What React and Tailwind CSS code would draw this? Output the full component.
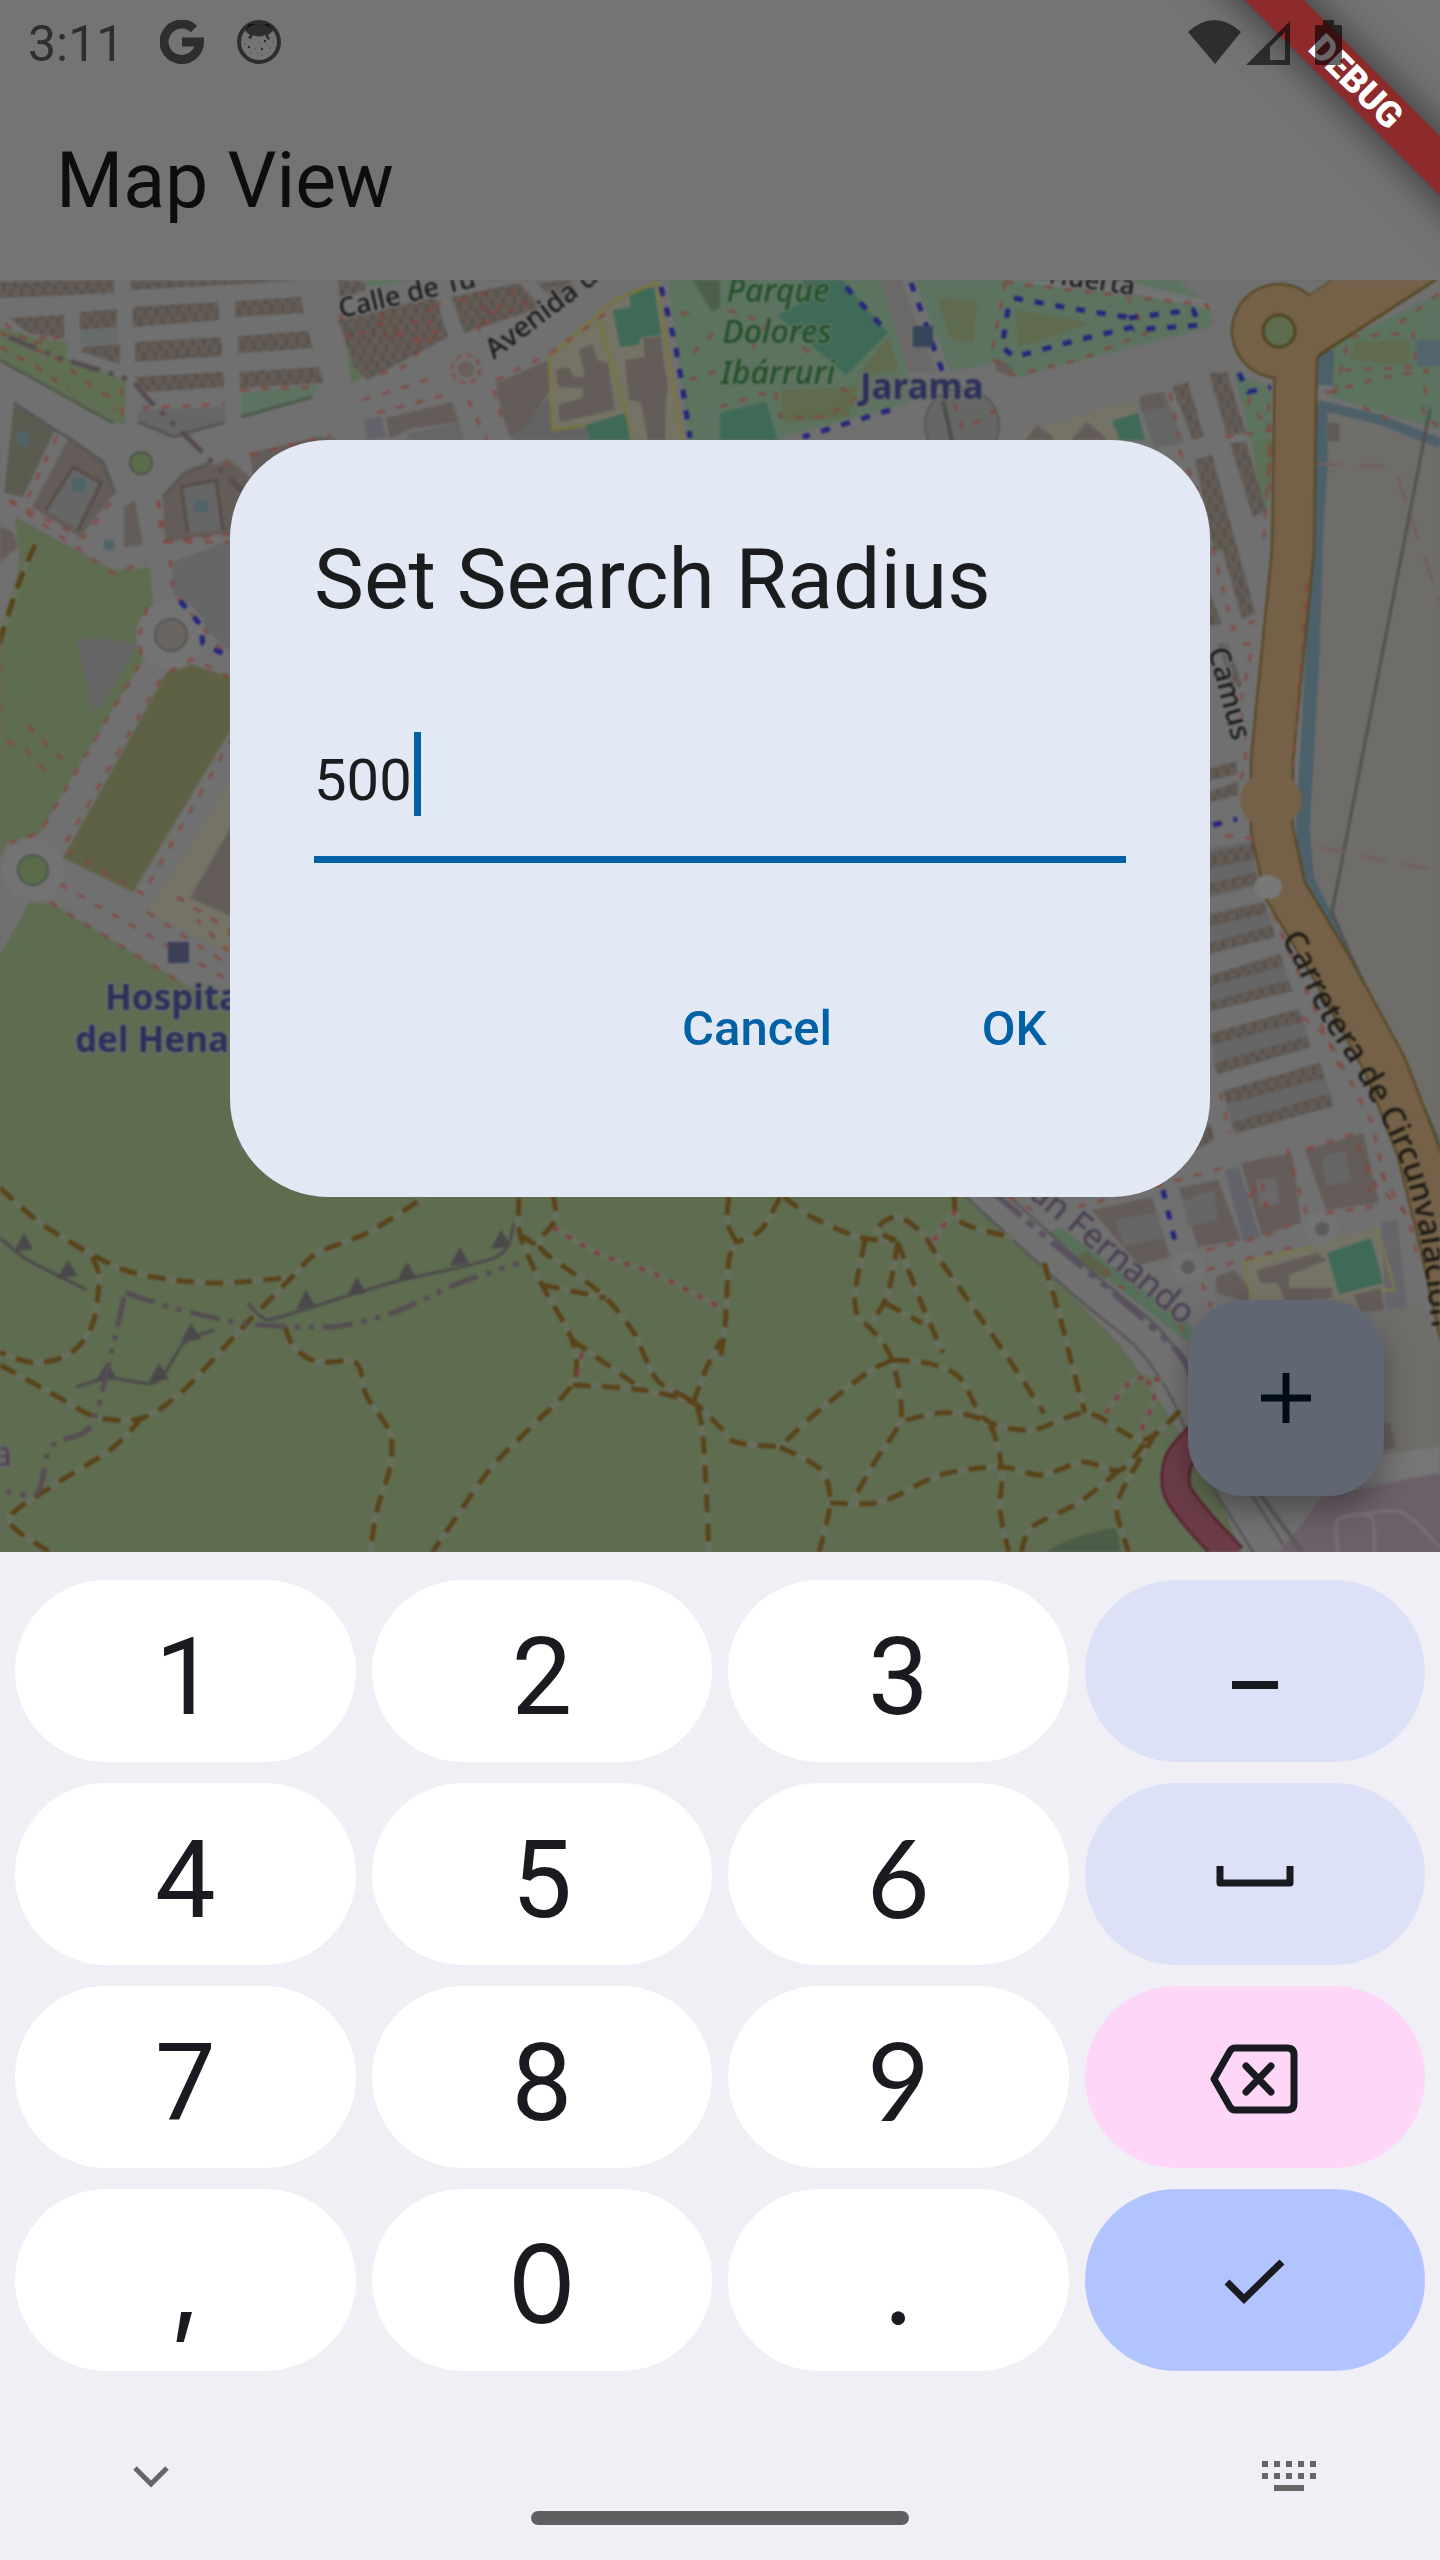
import React, { useState } from "react";

/* ---------- Map data ----------
   Each sheet has its own origin and scale; points are projected into map space. */
const SHEETS = {
  A: [0, 270, 0.4592, 0.3333],
  B: [720, 270, 0.4592, 0.3333],
  C: [0, 440, 0.3333, 0.5102],
  D: [1140, 440, 0.3333, 0.5102],
  E: [0, 1160, 0.4592, 0.3333],
  F: [720, 1160, 0.4592, 0.3333],
};

function project(sheet, points) {
  const [ox, oy, sx, sy] = SHEETS[sheet];
  return points.split(" ").map((pair) => {
    const [x, y] = pair.split(",").map(Number);
    return [Math.round(ox + x * sx), Math.round(oy + y * sy)];
  });
}

const toPoints = (sheet, points) =>
  project(sheet, points).map((p) => p.join(",")).join(" ");

function toCurve(sheet, points) {
  const p = project(sheet, points);
  let d = `M${p[0]}`;
  for (let i = 0; i < p.length - 1; i++) {
    const a = p[i - 1] || p[i];
    const b = p[i];
    const c = p[i + 1];
    const e = p[i + 2] || c;
    d += ` C${b[0] + (c[0] - a[0]) / 7} ${b[1] + (c[1] - a[1]) / 7} ${c[0] - (e[0] - b[0]) / 7} ${c[1] - (e[1] - b[1]) / 7} ${c[0]} ${c[1]}`;
  }
  return d;
}

const AREAS = [
  ["#5f6f54", "A", "0,170 80,205 150,215 145,265 275,330 272,462 240,455 0,270"],
  ["#5c7360", "A", "525,370 695,345 680,380 525,440"],
  ["#666666", "A", "300,420 490,412 490,455 380,500 300,455"],
  ["#666b6b", "A", "175,182 258,176 258,218 175,225"],
  ["#5b5b50", "A", "30,400 120,480 50,680 8,670"],
  ["#645c58", "A", "150,505 225,575 250,670 175,800 70,710"],
  ["#666666", "A", "160,590 220,640 170,780 100,720"],
  ["#645c58", "A", "355,680 400,610 500,570 545,620 500,790 360,815"],
  ["#666666", "A", "395,650 470,630 485,780 410,790"],
  ["#645c58", "A", "270,710 295,690 312,825 270,830"],
  ["#5c7360", "A", "800,30 890,30 850,45 800,48"],
  ["#5c7057", "A", "755,240 790,265 785,330 765,340"],
  ["#747365", "A", "1340,90 1430,35 1490,510 1380,510 1370,470 1205,480 1195,260"],
  ["#3e6a57", "A", "1370,65 1425,52 1430,110 1440,195 1395,200 1390,225 1350,230 1335,120 1375,110"],
  ["#3e6a57", "A", "1275,465 1360,430 1372,510 1285,510"],
  ["#645c58", "A", "1210,300 1240,290 1250,320 1275,320 1260,240 1290,222 1300,270 1325,280 1340,420 1220,455 1215,405 1270,385 1270,355 1215,350"],
  ["#645c58", "A", "1360,270 1405,262 1400,205 1440,200 1445,280 1455,350 1450,390 1448,510 1412,510 1395,395 1370,390"],
  ["#5c7360", "A", "1455,30 1568,30 1568,510 1500,510"],
  ["#4c5f49", "A", "1510,30 1568,30 1568,110 1550,125"],
  ["#626262", "A", "1110,500 1195,380 1205,480 1275,470 1285,510 1120,510"],
  ["#645c58", "A", "1080,340 1195,270 1195,370 1140,475 1110,505 1090,420"],
  ["#645c58", "A", "840,445 985,395 1000,455 900,475 850,505"],
  ["#666666", "A", "890,490 1000,460 1010,510 885,510"],
  ["#62626b", "A", "792,450 830,440 840,500 800,510"],
  ["#645c58", "A", "545,550 690,500 735,505 600,570 550,620"],
  ["#5c7360", "B", "0,30 350,30 410,200 410,400 130,505 130,510 0,510"],
  ["#3e6a57", "B", "125,135 190,90 180,30 265,30 365,190 275,315"],
  ["#3e6a57", "B", "0,430 100,395 125,510 0,510"],
  ["#606a4c", "B", "365,205 390,300 300,315"],
  ["#606a4c", "B", "130,360 300,350 280,440 140,460"],
  ["#6b6967", "B", "350,30 395,30 470,310 410,310"],
  ["#5c7360", "B", "425,30 1000,30 1070,110 1070,170 640,325 595,280 500,305"],
  ["#747474", "B", "625,30 900,40 1075,95 1075,120 900,72 700,45"],
  ["#606a4c", "B", "475,85 560,95 550,220 500,205"],
  ["#606a4c", "B", "645,120 805,160 650,235"],
  ["#645c58", "B", "600,265 635,290 635,320 600,300"],
  ["#747365", "B", "665,485 895,390 930,510 665,510"],
  ["#645c58", "B", "665,510 690,465 725,500 725,510"],
  ["#645c58", "B", "765,510 800,455 840,505 840,510"],
  ["#3e6a57", "B", "853,452 910,430 925,510 870,510"],
  ["#656565", "B", "910,390 970,370 1010,520 945,535"],
  ["#645c58", "B", "915,378 965,365 970,410 920,425"],
  ["#5c7360", "B", "1120,310 1200,350 1200,640 1180,660 1150,480"],
  ["#5c7360", "B", "1335,225 1568,70 1568,480 1330,380"],
  ["#606a4c", "B", "1380,215 1500,210 1500,285 1375,270"],
  ["#52646e", "B", "1518,210 1568,210 1568,287 1518,287"],
  ["#6f6d69", "B", "1320,425 1568,530 1568,840 1320,840"],
  ["#5e5a56", "B", "1325,460 1348,460 1348,570 1325,570"],
  ["#6f6d69", "D", "545,0 900,20 900,1370 515,875 520,700"],
  ["#5e6c50", "C", "45,150 340,255 450,250 460,330 415,390 430,430 180,700 120,770 20,790 0,820 0,400 60,240"],
  ["#645c58", "C", "0,170 40,180 55,210 0,240"],
  ["#666666", "C", "230,390 290,388 415,400 300,525 275,530"],
  ["#5f6144", "C", "500,455 570,440 690,465 690,570 400,885 190,820"],
  ["#747365", "C", "700,660 700,1010 445,925"],
  ["#645c58", "C", "700,750 700,935 570,898"],
  ["#666666", "C", "515,240 700,195 700,420 600,360 520,300"],
  ["#5c7057", "D", "340,0 400,0 380,150 350,80"],
  ["#666666", "D", "200,800 340,785 350,875 200,900"],
  ["#666666", "D", "200,930 375,905 405,975 200,1010"],
  ["#666666", "D", "205,1050 420,1008 455,1080 205,1120"],
  ["#666666", "D", "210,1165 480,1115 512,1190 230,1245"],
  ["#666666", "D", "250,1280 540,1220 582,1305 285,1360"],
  ["#645c58", "F", "810,150 940,110 980,290 910,315"],
  ["#666666", "F", "860,180 950,155 965,235 880,262"],
  ["#645c58", "F", "1000,85 1085,60 1135,240 1040,262"],
  ["#666666", "F", "1010,120 1075,90 1085,180 1020,200"],
  ["#62626b", "F", "1100,30 1130,20 1175,235 1140,242"],
  ["#645c58", "F", "1135,10 1245,-20 1265,190 1180,225"],
  ["#6a6868", "F", "1165,60 1210,50 1220,130 1175,140"],
  ["#645c58", "F", "1275,-30 1400,-80 1435,130 1320,150"],
  ["#666666", "F", "1310,-10 1360,-30 1375,60 1320,80"],
  ["#56705a", "F", "715,215 745,205 1030,500 1020,550"],
  ["#5d6148", "F", "770,290 800,275 850,330 840,360"],
  ["#747365", "F", "1140,310 1430,200 1470,390 1380,440 1160,430"],
  ["#645c58", "F", "1170,330 1300,280 1322,300 1240,345 1240,385 1335,385 1330,415 1230,425 1215,370 1175,370"],
  ["#645c58", "F", "1080,350 1120,330 1155,380 1150,425 1080,400"],
  ["#3e6a57", "F", "1322,280 1418,235 1443,370 1348,403"],
  ["#65656a", "F", "1440,190 1475,180 1495,440 1450,450"],
  ["#645c58", "F", "1380,405 1440,385 1447,450 1395,455"],
  ["#6f6d69", "F", "1440,455 1530,430 1568,600 1568,860 1450,885"],
  ["#645c58", "F", "1440,790 1460,790 1472,860 1440,870"],
  ["#6b5f69", "F", "1220,1175 1310,1010 1568,940 1568,1180"],
  ["#767676", "F", "1400,890 1568,862 1568,938 1380,975"],
];

const TERRACES = [
  ["A", "0,35 248,30 248,70 0,85"],
  ["A", "285,32 650,30 520,42 285,60"],
  ["A", "175,125 255,118 255,170 175,180"],
  ["A", "290,110 475,95 478,150 290,170"],
  ["A", "512,92 655,80 662,130 512,142"],
  ["A", "178,232 262,222 262,282 178,245"],
  ["A", "293,215 482,202 484,258 295,275"],
  ["A", "518,197 670,182 682,235 518,250"],
  ["A", "295,320 486,305 488,350 318,365"],
  ["A", "522,305 695,290 705,340 522,355"],
  ["A", "20,145 140,135 140,205 60,190"],
  ["A", "735,150 950,80 975,200 800,330 770,290"],
  ["A", "985,80 1130,40 1180,110 1010,190"],
  ["A", "1170,40 1240,30 1260,70 1210,95"],
  ["A", "735,30 795,35 795,60 740,90"],
  ["B", "985,350 1020,335 1055,500 1030,510"],
  ["B", "1065,310 1105,305 1145,490 1105,495"],
  ["B", "1035,570 1070,555 1120,840 1075,840"],
  ["B", "1110,520 1145,515 1190,720 1160,740"],
  ["D", "170,40 215,30 345,340 305,350"],
  ["D", "205,290 245,360 205,365"],
  ["D", "235,400 265,400 305,480 280,490"],
  ["D", "200,645 290,630 290,655 200,668"],
  ["D", "200,690 295,670 295,695 200,712"],
  ["D", "200,812 340,790 342,822 200,840"],
  ["D", "200,870 350,846 350,870 200,892"],
  ["D", "200,932 370,905 382,928 200,955"],
  ["D", "200,988 395,950 405,975 200,1008"],
  ["D", "210,1050 420,1008 432,1030 210,1070"],
  ["D", "210,1102 445,1058 458,1080 210,1120"],
  ["D", "215,1162 475,1115 490,1140 215,1185"],
  ["D", "222,1222 500,1168 510,1190 230,1242"],
  ["D", "250,1276 540,1222 555,1250 262,1302"],
  ["D", "272,1338 570,1280 580,1305 288,1358"],
  ["D", "150,1375 210,1340 225,1370 160,1395"],
];

const TRAILS = [
  ["E", "0,85 100,200 260,325 380,360 490,370 620,355"],
  ["E", "200,290 215,350 205,480 170,560 120,600 60,605 0,575"],
  ["E", "0,615 100,690 210,770 310,775 400,690 530,500 640,345 690,280 800,220 925,110"],
  ["E", "310,775 240,870 110,980 20,1080 110,1178"],
  ["E", "620,500 640,560 690,605 775,610 800,710 850,820 850,920 820,1050 805,1178"],
  ["E", "1130,115 1133,225 1180,375 1245,540 1248,670 1150,810 1060,940 940,1178"],
  ["E", "1205,100 1208,180 1175,260 1280,370 1325,420 1380,520 1430,660 1510,730 1530,830 1545,1178"],
  ["E", "1133,225 1175,260"],
  ["E", "1180,375 1320,415"],
  ["E", "1245,540 1370,660 1400,690"],
  ["E", "1248,675 1400,690 1510,730 1568,800 1600,845 1700,862"],
  ["E", "1510,730 1540,620 1570,540"],
  ["F", "20,110 15,190 35,250 20,300 10,500 0,600"],
  ["F", "130,110 90,210 30,250"],
  ["F", "140,110 200,170 300,230 380,240 345,215 355,185 390,172 440,220 480,300 560,460 640,620 705,760"],
  ["F", "510,100 525,185 640,235"],
  ["F", "315,240 295,400 300,470 330,510 375,600 395,770 340,900 290,1020"],
  ["F", "388,245 365,400 330,490"],
  ["F", "388,245 435,420 485,580"],
  ["F", "360,430 440,490"],
  ["F", "375,600 320,640 210,760 130,860"],
  ["F", "375,600 450,610 520,650 580,780 680,810 800,760 920,840 1005,750"],
  ["F", "405,780 480,760 540,765 590,800 615,930 610,1050 630,1178"],
  ["F", "130,860 220,930 240,1030 215,1178"],
  ["F", "240,1030 350,1025 480,945 610,920 700,945 790,905 870,930 930,840"],
  ["F", "870,930 780,1030 680,1100 655,1178"],
  ["F", "705,310 740,470 770,640 795,760"],
  ["F", "950,820 880,980 865,1060 890,1178"],
  ["C", "105,205 60,275 5,380 0,400"],
];

const FOOTPATHS = [
  ["A", "0,185 60,230 120,260 180,330 240,380 250,420"],
  ["A", "10,160 40,200 90,205 130,200 60,225"],
  ["A", "0,230 80,290 150,360"],
  ["A", "310,415 490,403"],
  ["A", "525,360 600,355 695,350"],
  ["A", "265,350 265,460"],
  ["A", "125,500 60,680"],
  ["A", "20,690 180,805 250,680"],
  ["A", "740,130 760,210 830,160 900,210 960,180 880,290 800,320"],
  ["A", "830,130 850,220 960,90 900,250"],
  ["A", "1000,90 1060,70 1040,190 1120,60 1150,110 1060,130"],
  ["A", "790,390 950,320"],
  ["A", "820,430 970,375"],
  ["A", "545,555 720,495"],
  ["A", "1020,390 1060,510"],
  ["A", "1075,360 1090,440"],
  ["A", "1080,330 1200,250 1320,130"],
  ["A", "1440,60 1460,140 1520,120"],
  ["A", "1510,250 1568,170"],
  ["A", "1500,330 1568,300"],
  ["A", "490,570 510,620"],
  ["A", "355,815 520,790"],
  ["A", "345,690 350,800"],
  ["B", "620,35 590,265 640,315 780,270 930,190 890,90"],
  ["B", "620,35 800,65 1060,105 1075,155"],
  ["B", "0,410 120,360 130,440 230,440 300,380 260,350"],
  ["B", "20,120 100,160 60,260"],
  ["B", "180,230 210,270"],
  ["B", "980,370 1000,500"],
  ["B", "1000,540 1040,660"],
  ["B", "1100,500 1200,480 1150,400 1160,350"],
  ["B", "1195,400 1195,700"],
  ["B", "1340,370 1370,200 1510,190 1515,290 1360,300"],
  ["B", "1320,370 1420,330 1540,300 1530,440 1568,470"],
  ["B", "1400,410 1460,450"],
  ["B", "1480,160 1568,70"],
  ["B", "510,400 530,480 600,420"],
  ["C", "30,120 340,260 440,240"],
  ["C", "475,120 500,200 690,200"],
  ["C", "510,235 520,300 690,430"],
  ["C", "440,330 415,390 430,430 120,770 30,790"],
  ["C", "690,465 580,430 490,460 190,800 430,890 690,590"],
  ["C", "85,560 210,640"],
  ["C", "20,590 80,610 160,665"],
  ["C", "180,870 470,980 690,1060"],
  ["C", "150,905 560,1070"],
  ["C", "440,925 690,1030"],
  ["C", "530,895 690,960 680,1000 590,940"],
  ["C", "0,400 0,570 20,590"],
  ["D", "215,210 280,370 360,350"],
  ["D", "390,20 370,210"],
  ["D", "500,280 460,640"],
  ["D", "310,400 340,400 300,520 320,600 300,680"],
  ["D", "340,780 215,775"],
  ["D", "400,930 520,1110 600,1230"],
  ["D", "490,1130 560,1170 700,1340 740,1480 840,1540"],
  ["D", "240,1280 270,1360"],
  ["D", "440,1390 500,1520"],
  ["D", "500,1390 640,1360 720,1480"],
  ["D", "340,1460 380,1500 350,1500"],
  ["F", "630,110 680,150"],
  ["F", "780,140 1000,60 1100,20"],
  ["F", "1150,110 1180,70 1190,140"],
  ["F", "1060,270 1180,230 1250,190"],
  ["F", "1320,160 1420,140 1410,10"],
  ["F", "1060,330 1160,290 1250,260"],
  ["F", "1050,370 1070,440"],
  ["F", "840,330 870,380 910,400"],
  ["F", "980,440 1030,560"],
  ["F", "1440,40 1500,180 1520,300"],
];

const RED_DOTS = [
  ["E", "1205,200 1300,280 1430,345 1568,440"],
  ["E", "1268,580 1255,660"],
  ["F", "515,150 480,210 460,260"],
  ["F", "840,760 900,660 965,660"],
  ["F", "930,660 945,720 910,830"],
];

const CYCLEWAYS = [
  ["B", "640,85 760,115 885,140 900,170 780,210 640,260 615,230 630,100"],
  ["B", "890,145 1030,120 1045,165 900,180"],
  ["B", "415,40 450,170 475,270 490,320"],
  ["B", "275,50 365,190"],
  ["B", "370,420 180,500"],
  ["B", "1130,310 1150,365 1200,350"],
  ["A", "1440,50 1470,220 1490,380 1502,505"],
  ["C", "540,315 600,360 610,400 690,425"],
  ["D", "220,755 290,742"],
  ["F", "965,90 995,270"],
];

const TEETH = [[50, 250], [145, 330], [665, 420], [775, 380], [885, 335], [1000, 290], [1090, 240], [230, 635], [345, 640], [415, 520]];

const ROAD = "M1296 345 L1293 550 L1286 620 L1272 760 L1272 830 L1285 890 L1330 965 L1385 1065 L1418 1150 L1440 1240 L1462 1340 L1475 1420";

function CityMap() {
  return (
    <svg
      className="block h-full w-full blur-[1px]"
      viewBox="0 280 1440 1272"
      preserveAspectRatio="xMidYMid slice"
      role="img"
      aria-label="Street map"
      fontFamily='"Noto Sans", sans-serif'
    >
      <defs>
        <pattern id="terrace" width="11" height="17" patternUnits="userSpaceOnUse" patternTransform="rotate(-6)">
          <rect width="11" height="17" fill="#625b56" />
          <path d="M2 0V8M7 8V17" stroke="#57504a" strokeWidth="3" />
        </pattern>
        <path id="road-label" d="M1281 938 C1300 970 1312 1005 1330 1032 S1380 1110 1398 1155 S1425 1250 1434 1350" />
      </defs>

      <rect x="-40" y="240" width="1520" height="1360" fill="#707070" />
      <path
        fill="#5e6c50"
        d="M0 955 L30 902 L52 904 L187 986 L240 1000 V1150 H930 L975 1200 L1042 1265 L1120 1345 L1156 1395 L1184 1440 L1220 1500 L1245 1560 H-20 V960 Z"
      />
      {AREAS.map(([fill, sheet, pts], i) => (
        <polygon key={i} points={toPoints(sheet, pts)} fill={fill} />
      ))}
      {TERRACES.map(([sheet, pts], i) => (
        <polygon key={i} points={toPoints(sheet, pts)} fill="url(#terrace)" />
      ))}

      {/* School grounds and courtyard outlines */}
      <g fill="none" strokeWidth="3">
        <polyline points={toPoints("A", "1430,35 1340,90 1195,260 1205,480 1275,465")} stroke="#7a7540" />
        <polyline points={toPoints("A", "1305,150 1380,510")} stroke="#7a7540" />
        <polyline points={toPoints("A", "1430,35 1485,510")} stroke="#7a7540" />
        <polyline points={toPoints("F", "1160,430 1140,310 1290,260")} stroke="#7a7650" />
        <polyline points={toPoints("F", "1430,200 1470,390 1440,390")} stroke="#7a7650" />
        <polyline points={toPoints("A", "100,720 160,590 220,640 170,780")} stroke="#554c48" />
        <polyline points={toPoints("A", "410,790 395,650 470,630 485,780")} stroke="#554c48" />
        <polyline points={toPoints("A", "30,400 120,480 150,505 225,575 250,670")} stroke="#565656" />
        <polyline points={toPoints("A", "355,680 400,610 460,580")} stroke="#565656" />
        <polyline points={toPoints("A", "300,455 380,500 490,455")} stroke="#565656" />
        <polyline points={toPoints("A", "0,270 245,460")} stroke="#525a4c" />
        <polyline points={toPoints("A", "525,440 680,380")} stroke="#4c5a4c" />
      </g>
      <g fill="#506468">
        <rect x="72" y="478" width="14" height="14" />
        <rect x="194" y="500" width="14" height="12" />
        <rect x="17" y="432" width="12" height="14" />
        <rect x="104" y="540" width="10" height="10" />
      </g>

      {/* Railway corridor */}
      <g fill="none">
        <path d={toCurve("F", "560,80 800,380 930,530 1010,690 1060,850 1110,980 1200,1178")} stroke="#565656" strokeWidth="32" />
        <path d={toCurve("F", "560,80 800,380 930,530 1010,690 1060,850 1110,980 1200,1178")} stroke="#717171" strokeWidth="27" />
        <path d={toCurve("F", "590,90 700,220 850,390 1000,580 1030,680")} stroke="#5a5160" strokeWidth="6" strokeDasharray="40 8 8 8 8 8" />
        <path d={toCurve("F", "1170,990 1270,1178")} stroke="#5a5759" strokeWidth="4" />
        <path d={toCurve("F", "1345,1175 1345,1080 1418,1070 1425,1178")} stroke="#756d71" strokeWidth="4" />
        <path d={toCurve("F", "1350,1075 1480,1055 1568,1165")} stroke="#756d71" strokeWidth="4" />
        <path d={toCurve("F", "1050,820 1000,900 995,990 1040,1080 1115,1190")} stroke="#57202f" strokeWidth="30" />
        <path d={toCurve("F", "1050,820 1000,900 995,990 1040,1080 1115,1190")} stroke="#6b3c47" strokeWidth="25" />
      </g>
      <path fill="#4c5d47" d={toCurve("F", "705,1178 760,1140 810,1118 860,1108 872,1178")} />

      {/* Water along the ring road */}
      <g fill="none" stroke="#4c606a">
        <polyline points={toPoints("B", "1320,240 1318,345")} strokeWidth="16" />
        <polyline points={toPoints("B", "1308,400 1308,600 1295,840")} strokeWidth="13" />
        <polyline points={toPoints("B", "1305,405 1440,450 1568,520")} strokeWidth="10" />
        <polyline points={toPoints("D", "535,60 520,400 488,760 500,860 620,1020 905,1410")} strokeWidth="14" />
      </g>
      <polyline points={toPoints("D", "870,-60 850,10 575,925 905,1430")} fill="none" stroke="#50504e" strokeWidth="3" />
      <g fill="none" stroke="#735f5c" strokeWidth="3" strokeDasharray="26 16">
        <polyline points={toPoints("D", "530,48 720,50 770,70 900,320")} />
        <polyline points={toPoints("D", "540,800 900,845")} />
      </g>

      {/* Ring road */}
      <g fill="none" strokeLinejoin="round">
        <path d={ROAD} stroke="#55431c" strokeWidth="44" />
        <path d="M1295 338 L1480 218" stroke="#55431c" strokeWidth="58" />
        <circle cx="1279" cy="331" r="48" fill="#55431c" />
        <path d={ROAD} stroke="#746148" strokeWidth="40" />
        <path d="M1290 340 L1480 218" stroke="#746148" strokeWidth="54" />
        <circle cx="1279" cy="331" r="46" fill="#746148" />
        <ellipse cx="1271" cy="800" rx="31" ry="28" fill="#746148" />
      </g>
      <circle cx="1279" cy="331" r="16" fill="#5e6c50" stroke="#4e4520" strokeWidth="3" />
      <ellipse cx="1268" cy="887" rx="14" ry="12" fill="#787878" />

      {/* Roundabouts */}
      <circle cx="141" cy="463" r="11" fill="#5b6c4b" stroke="#4c5548" strokeWidth="2" />
      <circle cx="466" cy="369" r="14" fill="none" stroke="#7e504a" strokeWidth="3" strokeDasharray="6 5" />
      <circle cx="466" cy="369" r="8" fill="#6d5f5a" />
      <circle cx="171" cy="635" r="26" fill="none" stroke="#737373" strokeWidth="18" />
      <circle cx="171" cy="635" r="16" fill="#6a6561" stroke="#555" strokeWidth="2" />
      <circle cx="33" cy="870" r="23" fill="none" stroke="#737373" strokeWidth="16" />
      <circle cx="33" cy="870" r="15" fill="#5b6c4b" stroke="#4c5548" strokeWidth="2" />
      <circle cx="962" cy="425" r="37" fill="#656765" stroke="#535953" strokeWidth="2" />
      <path d="M942 395 L956 460" stroke="#4a4d4a" strokeWidth="4" />
      <circle cx="1188" cy="1267" r="17" fill="#737373" />
      <circle cx="1188" cy="1267" r="7" fill="#5c5c5c" />
      <circle cx="1322" cy="1229" r="17" fill="#737373" />
      <circle cx="1322" cy="1229" r="7" fill="#5c5c5c" />

      {/* Paths */}
      <g fill="none" stroke="#666f5c" strokeWidth="7">
        {TRAILS.map(([s, p], i) => (
          <path key={i} d={toCurve(s, p)} />
        ))}
        {RED_DOTS.map(([s, p], i) => (
          <path key={i} d={toCurve(s, p)} />
        ))}
      </g>
      <g fill="none" stroke="#584318" strokeWidth="5" strokeDasharray="18 11">
        {TRAILS.map(([s, p], i) => (
          <path key={i} d={toCurve(s, p)} />
        ))}
      </g>
      <g fill="none" stroke="#84463f" strokeOpacity="0.85" strokeWidth="3" strokeDasharray="8 12">
        {FOOTPATHS.map(([s, p], i) => (
          <polyline key={i} points={toPoints(s, p)} />
        ))}
      </g>
      <g fill="none" stroke="#7c3f42" strokeWidth="4" strokeDasharray="6 10">
        {RED_DOTS.map(([s, p], i) => (
          <path key={i} d={toCurve(s, p)} />
        ))}
      </g>
      <g fill="none" stroke="#25257c" strokeWidth="5" strokeDasharray="9 12">
        {CYCLEWAYS.map(([s, p], i) => (
          <polyline key={i} points={toPoints(s, p)} />
        ))}
      </g>

      {/* Escarpments and boundary */}
      <g fill="none" stroke="#4c4a4b" strokeWidth="3">
        <path d={toCurve("E", "0,235 60,300 190,390")} />
        <path d={toCurve("E", "540,430 570,470 610,470 850,370 1080,290 1120,190")} />
        <path d={toCurve("E", "165,680 240,655 340,665 400,550 465,510")} />
      </g>
      {TEETH.map(([x, y]) => (
        <polygon key={x} fill="#4a484a" points={toPoints("E", `${x - 20},${y + 27} ${x + 2},${y - 30} ${x + 22},${y + 18}`)} />
      ))}
      <g fill="none" stroke="#564c53" strokeWidth="5" strokeDasharray="30 9 5 9 5 9">
        <path d={toCurve("E", "275,400 370,440 530,490 720,500 860,455 1000,370 1130,310")} />
        <path d={toCurve("E", "270,410 235,620 195,800 110,860 80,1000 0,990")} />
        <path d={toCurve("A", "20,200 130,265 280,330 320,385 430,530 530,665")} />
      </g>

      <rect x="913" y="326" width="20" height="21" fill="#36455c" />
      <rect x="168" y="942" width="21" height="21" fill="#3c4056" />

      {/* Labels */}
      <g paintOrder="stroke" strokeLinejoin="round">
        <g fill="#1a1a1a" stroke="#747474" strokeWidth="4" fontWeight="500">
          <text fontSize="27" transform="translate(341 318) rotate(-13)">Calle de Tu</text>
          <text fontSize="28" transform="translate(494 360) rotate(-37)">Avenida de</text>
          <text fontSize="26" transform="translate(1048 283) rotate(8)">Huerta</text>
          <text fontSize="29" transform="translate(1208 650) rotate(75)">Camus</text>
        </g>
        <text fontSize="32" fontWeight="500" fill="#1d1a14">
          <textPath href="#road-label">Carretera de Circunvalación</textPath>
        </text>
        <g fill="#205029" stroke="#647563" strokeWidth="3" fontSize="32" fontStyle="italic" fontWeight="500" textAnchor="middle">
          <text x="778" y="302">Parque</text>
          <text x="777" y="343">Dolores</text>
          <text x="778" y="384">Ibárruri</text>
        </g>
        <g fill="#2c305a" stroke="#6a6e6a" strokeWidth="4" fontSize="35" fontWeight="700">
          <text x="860" y="399">Jarama</text>
          <text x="105" y="1010">Hospital</text>
          <text x="75" y="1052">del Henares</text>
        </g>
        <g fill="#4a3f55" stroke="#6c6c6b" strokeWidth="3" fontSize="34">
          <text textAnchor="end" transform="translate(1183 1326) rotate(40)">San Fernando</text>
          <text textAnchor="end" x="12" y="1466">a</text>
        </g>
      </g>
    </svg>
  );
}

/* ---------- Status bar ---------- */
function GoogleIcon() {
  return (
    <svg className="h-11 w-11" viewBox="0 0 44 44" fill="none" stroke="currentColor" strokeWidth="9" aria-hidden="true">
      <path d="M34 9A17.700 17.700 0 1 0 39.500 22H22" />
    </svg>
  );
}

function CatIcon() {
  return (
    <svg className="h-11 w-11" viewBox="0 0 44 44" aria-hidden="true">
      <circle cx="22" cy="22" r="20" fill="none" stroke="currentColor" strokeWidth="4" />
      <path d="M8 11 L12 4 H32 L36 11 L31 15 L33 19 L31 20 L28 15 C24 17 20 17 16 15 L14 19 L11 18 L13 15 Z" fill="currentColor" />
      <g fill="currentColor">
        <circle cx="28" cy="21" r="1.200" />
        <circle cx="12" cy="27" r="1.200" />
        <circle cx="25" cy="29" r="1.200" />
        <circle cx="18" cy="29" r=".6" />
        <circle cx="22" cy="22" r=".6" />
        <circle cx="33" cy="28" r=".6" />
        <circle cx="14" cy="33" r=".6" />
        <circle cx="21" cy="33" r=".6" />
        <circle cx="8" cy="24" r=".6" />
        <circle cx="36" cy="22" r=".6" />
        <circle cx="25" cy="35" r=".6" />
      </g>
    </svg>
  );
}

function StatusIcons() {
  return (
    <svg className="h-12 w-[156px]" viewBox="0 0 156 48" fill="currentColor" aria-hidden="true">
      <path d="M0 14 Q26 -10 53 14 L27 46 Z" />
      <path fillRule="evenodd" d="M58 47 L102 3 V47 Z M82 29 V42 H97 V14 Z" />
      <path d="M135 2 H146 V7 H152 Q154 7 154 9 V45 Q154 47 152 47 H129 Q127 47 127 45 V9 Q127 7 129 7 H135 Z" />
    </svg>
  );
}

function DebugBanner() {
  return (
    <div className="pointer-events-none absolute right-0 top-0 h-[300px] w-[300px] overflow-hidden">
      <div className="absolute -left-[34px] top-[61px] flex h-[42px] w-[500px] rotate-45 items-center justify-center bg-[#8c2a2c] text-[36px] font-black leading-none text-white shadow-[0_0_42px_rgba(0,0,0,0.6)]">
        DEBUG
      </div>
    </div>
  );
}

/* ---------- Keypad ---------- */
const keyBase = "flex h-[182px] items-center justify-center rounded-full text-[#1a1b20]";

function MinusIcon() {
  return (
    <svg className="mt-7 h-2 w-[46px]" viewBox="0 0 46 8" fill="currentColor" aria-hidden="true">
      <rect width="46" height="8" />
    </svg>
  );
}

function SpaceIcon() {
  return (
    <svg className="mt-1 h-6 w-20" viewBox="0 0 80 24" fill="none" stroke="currentColor" strokeWidth="7" strokeLinejoin="round" aria-hidden="true">
      <path d="M5 2V19H75V2" />
    </svg>
  );
}

function BackspaceIcon() {
  return (
    <svg className="mt-1 h-[72px] w-[90px]" viewBox="0 0 90 72" fill="none" stroke="currentColor" strokeWidth="7" strokeLinejoin="round" aria-hidden="true">
      <path d="M25 5H77Q84 5 84 12V60Q84 67 77 67H25Q22 67 20 64L4 36L20 8Q22 5 25 5Z" />
      <path d="M36 23L61 49M61 23L36 49" strokeLinecap="round" />
    </svg>
  );
}

function CheckIcon() {
  return (
    <svg className="mt-1 h-12 w-16" viewBox="0 0 64 48" fill="none" stroke="currentColor" strokeWidth="7" aria-hidden="true">
      <path d="M4 24L21 41L59 4" />
    </svg>
  );
}

const KEYS = [
  { id: "1" }, { id: "2" }, { id: "3" },
  { id: "minus", icon: MinusIcon, tone: "bg-[#dde1f8]" },
  { id: "4" }, { id: "5" }, { id: "6", face: "lato" },
  { id: "space", icon: SpaceIcon, tone: "bg-[#dde1f8]" },
  { id: "7" }, { id: "8" }, { id: "9", face: "lato" },
  { id: "backspace", icon: BackspaceIcon, tone: "bg-[#fdd6f8]" },
  { id: ",", face: "inter" }, { id: "0", face: "inter" }, { id: ".", face: "lato" },
  { id: "done", icon: CheckIcon, tone: "bg-[#b2c4ff]" },
];

const FACES = {
  roboto: "pt-3 font-['Roboto',sans-serif]",
  lato: "pt-1 font-['Lato',sans-serif]",
  inter: "pt-2 font-['Inter',sans-serif]",
};

function Keypad({ onKey }) {
  return (
    <section aria-label="Number keyboard" className="bg-[#f0eff6] text-[#666666]">
      <div className="grid grid-cols-4 gap-x-4 gap-y-[21px] px-[15px] pt-7">
        {KEYS.map(({ id, icon: Icon, tone, face }) => (
          <button
            key={id}
            type="button"
            aria-label={Icon ? id : undefined}
            onClick={() => onKey(id)}
            className={`${keyBase} ${tone || "bg-white"}`}
          >
            {Icon ? (
              <Icon />
            ) : (
              <span className={`text-[108px] leading-none ${FACES[face || "roboto"]}`}>{id}</span>
            )}
          </button>
        ))}
      </div>
      <div className="flex items-center justify-between px-[125px] pt-20">
        <button type="button" aria-label="Hide keyboard" className="flex h-[52px] w-[52px] items-center justify-center">
          <svg className="h-6 w-9" viewBox="0 0 36 24" fill="none" stroke="currentColor" strokeWidth="5" aria-hidden="true">
            <path d="M2 3L18 19L34 3" />
          </svg>
        </button>
        <button type="button" aria-label="Switch keyboard" className="flex h-[52px] w-[52px] items-center justify-center">
          <svg className="h-8 w-[54px] shrink-0" viewBox="0 0 54 32" fill="currentColor" aria-hidden="true">
            {[0, 12, 24, 36, 48].map((x) => (
              <path key={x} d={`M${x} 0h6v6h-6zM${x} 12h6v6h-6z`} />
            ))}
            <path d="M12 24H42V30H12Z" />
          </svg>
        </button>
      </div>
      <div className="flex justify-center pb-[35px] pt-2">
        <div className="h-3.5 w-[378px] rounded-full bg-[#5f5f61]" />
      </div>
    </section>
  );
}

/* ---------- Dialog ---------- */
function RadiusDialog({ value, onChange }) {
  return (
    <form
      role="dialog"
      aria-labelledby="radius-title"
      onSubmit={(e) => e.preventDefault()}
      className="w-full max-w-[980px] rounded-[98px] bg-[#e2e9f5] px-[84px] pb-[82px] pt-[84px]"
    >
      <h2 id="radius-title" className="text-[84px] leading-[112px] text-[#1a1c1e]">
        Set Search Radius
      </h2>
      <div className="mt-14 flex h-[171px] items-center gap-0.5 border-b-[7px] border-[#0061a4]">
        <input
          aria-labelledby="radius-title"
          inputMode="numeric"
          size={3}
          value={value}
          onChange={(e) => onChange(e.target.value)}
          className="max-w-full bg-transparent pt-3 text-[58px] leading-[84px] text-[#1a1c1e] caret-transparent outline-none [field-sizing:content]"
        />
        <span className="h-[84px] w-[7px] shrink-0 bg-[#0061a4]" />
      </div>
      <div className="mt-20 flex justify-end gap-7 text-[49px] font-medium leading-[70px] text-[#0061a4]">
        <button type="button" className="h-[172px] px-[42px]">Cancel</button>
        <button type="submit" className="h-[172px] min-w-[224px] px-[42px]">OK</button>
      </div>
    </form>
  );
}

export default function App() {
  const [radius, setRadius] = useState("500");

  const onKey = (id) => {
    if (id === "backspace") setRadius((r) => r.slice(0, -1));
    else if (/^[0-9.,]$/.test(id)) setRadius((r) => r + id);
  };

  return (
    <div className="flex min-h-screen flex-col font-['Roboto',sans-serif]">
      <div className="relative flex flex-1 flex-col">
        <header className="relative bg-[#747474]">
          <DebugBanner />
          <div className="relative flex h-[84px] items-center justify-between pl-7 pr-[96px] text-black/60">
            <div className="flex items-center">
              <span className="pt-1 text-[50px] leading-[84px]">3:11</span>
              <span className="ml-9 flex gap-[33px]">
                <GoogleIcon />
                <CatIcon />
              </span>
            </div>
            <StatusIcons />
          </div>
          <h1 className="flex h-[196px] items-center px-14 pb-0.5 text-[77px] leading-[98px] text-[#0c0d0e]">Map View</h1>
        </header>

        <main className="relative flex-1 overflow-hidden bg-[#6b6b6b]">
          <div className="absolute inset-0">
            <CityMap />
          </div>
          <button
            type="button"
            aria-label="Add"
            className="absolute bottom-14 right-14 flex h-[196px] w-[196px] items-center justify-center rounded-[56px] bg-[#606773] text-[#000d18] shadow-[0_14px_28px_rgba(0,0,0,0.3)]"
          >
            <svg className="h-[50px] w-[50px]" viewBox="0 0 50 50" stroke="currentColor" strokeWidth="7" aria-hidden="true">
              <path d="M25 0V50M0 25H50" />
            </svg>
          </button>
        </main>

        <div className="absolute inset-0 flex items-center justify-center px-14 pt-[84px]">
          <RadiusDialog value={radius} onChange={setRadius} />
        </div>
      </div>
      <Keypad onKey={onKey} />
    </div>
  );
}
